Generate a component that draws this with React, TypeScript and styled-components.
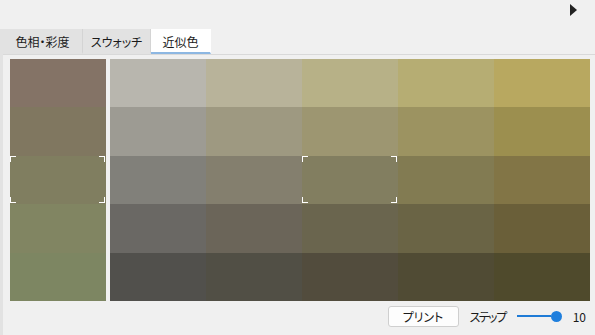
import React from "react"
import styled, { createGlobalStyle } from "styled-components"

const GlobalStyle = createGlobalStyle`
  body {
    margin: 0;
    background: #f0f0f0;
    font-family: "Noto Sans CJK JP", "Noto Sans", sans-serif;
    font-feature-settings: "palt";
    color: #1a1a1a;
  }
`

const tabs = [
  { label: "色相・彩度", width: 80 },
  { label: "スウォッチ", width: 68 },
  { label: "近似色", width: 60 },
]

const baseColors = ["#847366", "#807760", "#807e60", "#818562", "#7d8662"]

const gridColors = [
  ["#b8b6ae", "#b8b39a", "#b7b187", "#b6ad73", "#b8a860"],
  ["#9d9b93", "#9e9981", "#9d9671", "#9c9361", "#9c8f4f"],
  ["#81807a", "#847f6e", "#827e60", "#827b52", "#827546"],
  ["#6a6864", "#6b6559", "#6a654e", "#6a6445", "#6a5f39"],
  ["#51504c", "#514f45", "#524c3d", "#504b34", "#4f4a2c"],
]

export default function App() {
  return (
    <Page>
      <GlobalStyle />
      <TopBar>
        <Triangle />
      </TopBar>
      <Panel>
        <TabBar>
          {tabs.map((t, i) => (
            <Tab key={t.label} active={i === 2} width={t.width}>
              {t.label}
            </Tab>
          ))}
        </TabBar>
        <Content>
          <BaseColumn>
            {baseColors.map((c, i) => (
              <Swatch key={c} style={{ background: c }}>
                {i === 2 && <Brackets />}
              </Swatch>
            ))}
          </BaseColumn>
          <Grid>
            {gridColors.map((row, r) =>
              row.map((c, col) => (
                <Swatch key={`${r}-${col}`} style={{ background: c }}>
                  {r === 2 && col === 2 && <Brackets />}
                </Swatch>
              ))
            )}
          </Grid>
        </Content>
        <Footer>
          <PrintButton>プリント</PrintButton>
          <Label>ステップ</Label>
          <Slider>
            <Track />
            <Thumb />
          </Slider>
          <Value>10</Value>
        </Footer>
      </Panel>
    </Page>
  )
}

const Brackets = () => (
  <>
    <Corner pos="tl" />
    <Corner pos="tr" />
    <Corner pos="bl" />
    <Corner pos="br" />
  </>
)

const Page = styled.div`
  width: 595px;
  height: 335px;
  display: flex;
  flex-direction: column;
  overflow: hidden;
`
const TopBar = styled.div`
  height: 29px;
  display: flex;
  justify-content: flex-end;
  align-items: flex-start;
  padding: 4px 18px 0 0;
  box-sizing: border-box;
`
const Triangle = styled.div`
  width: 0;
  height: 0;
  border-left: 7px solid #222;
  border-top: 6.5px solid transparent;
  border-bottom: 6.5px solid transparent;
`
const Panel = styled.div`
  flex: 1;
  display: flex;
  flex-direction: column;
  border-left: 3px solid #e2e2e2;
`
const TabBar = styled.div`
  height: 25px;
  display: flex;
  border-bottom: 1px solid #d9d9d9;
`
const Tab = styled.div<{ active?: boolean; width: number }>`
  width: ${p => p.width}px;
  display: flex;
  align-items: center;
  justify-content: center;
  font-size: 12px;
  box-sizing: border-box;
  padding-top: 2px;
  background: ${p => (p.active ? "#fff" : "#e2e2e2")};
  border-right: 1px solid ${p => (p.active ? "#fff" : "#d4d4d4")};
  border-bottom: 2px solid ${p => (p.active ? "#8db7e2" : "transparent")};
  color: #1a1a1a;
`
const Content = styled.div`
  display: flex;
  gap: 4px;
  padding: 4px 5px 0 7px;
`
const BaseColumn = styled.div`
  width: 96px;
  height: 242px;
  display: grid;
  grid-template-rows: repeat(5, 1fr);
`
const Grid = styled.div`
  flex: 1;
  height: 242px;
  display: grid;
  grid-template-columns: repeat(5, 1fr);
  grid-template-rows: repeat(5, 1fr);
`
const Swatch = styled.div`
  position: relative;
`
const Corner = styled.span<{ pos: "tl" | "tr" | "bl" | "br" }>`
  position: absolute;
  width: 5px;
  height: 5px;
  border-color: #fff;
  border-style: solid;
  border-width: 0;
  ${p => (p.pos[0] === "t" ? "top: 0; border-top-width: 1px;" : "bottom: 1px; border-bottom-width: 1px;")}
  ${p => (p.pos[1] === "l" ? "left: 0; border-left-width: 1px;" : "right: 1px; border-right-width: 1px;")}
`
const Footer = styled.div`
  display: flex;
  justify-content: flex-end;
  align-items: center;
  padding: 4px 9px 0 0;
  height: 22px;
`
const PrintButton = styled.button`
  width: 71px;
  height: 21px;
  padding: 0;
  background: #fdfdfd;
  border: 1px solid #cfcfcf;
  border-radius: 3px;
  font-family: inherit;
  font-feature-settings: "palt";
  font-size: 12px;
  color: #1a1a1a;
  margin-right: 11px;
`
const Label = styled.span`
  font-size: 12px;
  letter-spacing: -1.5px;
  margin-right: 11px;
`
const Slider = styled.div`
  display: flex;
  align-items: center;
  margin-right: 11px;
`
const Track = styled.div`
  width: 34px;
  height: 2px;
  background: #1f7bd6;
`
const Thumb = styled.div`
  width: 11px;
  height: 11px;
  border-radius: 50%;
  background: #1f7fdd;
`
const Value = styled.span`
  font-size: 12px;
`
